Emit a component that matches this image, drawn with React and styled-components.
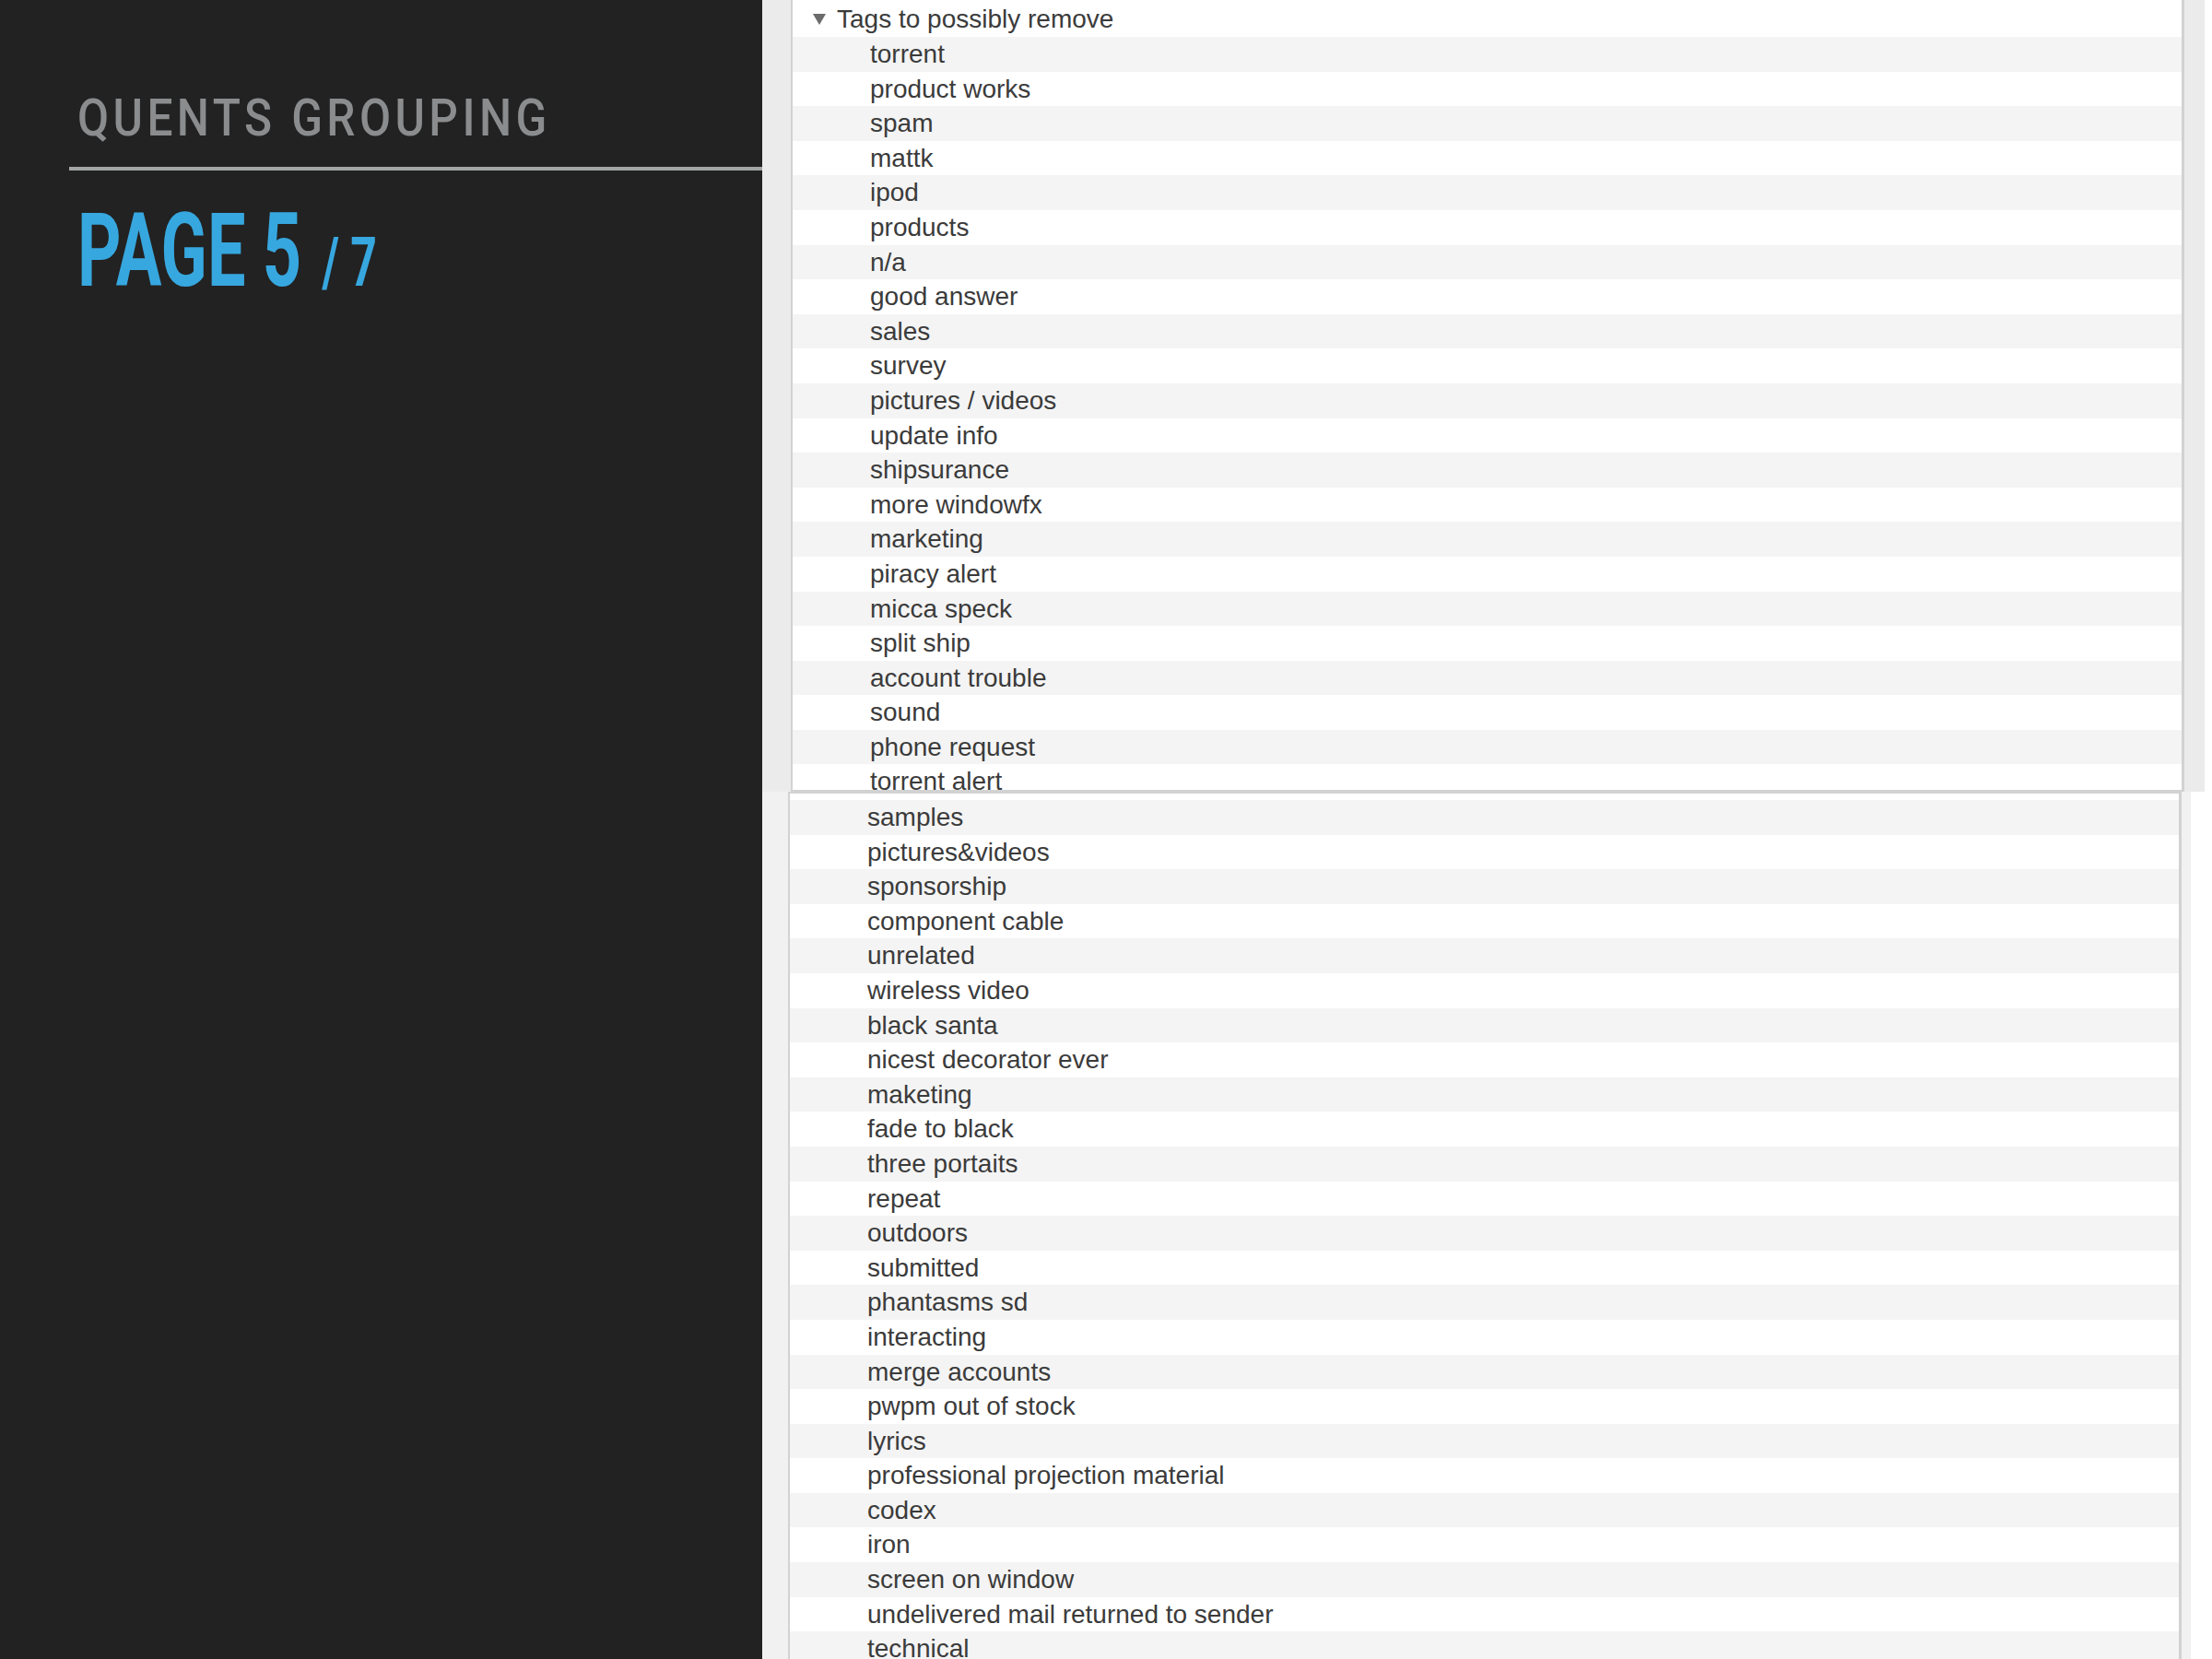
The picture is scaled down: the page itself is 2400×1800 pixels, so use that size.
import React from 'react'
import styled, { createGlobalStyle } from 'styled-components'

const GlobalStyle = createGlobalStyle`
  html, body {
    margin: 0;
    padding: 0;
    background: #ffffff;
  }
`

const Slide = styled.div`
  display: flex;
  width: 2400px;
  height: 1800px;
  overflow: hidden;
`

const Sidebar = styled.aside`
  width: 827px;
  flex-shrink: 0;
  box-sizing: border-box;
  padding: 100px 0 0 84px;
  background: #222222;
`

const Section = styled.div`
  font-family: Roboto, "Liberation Sans", sans-serif;
  font-weight: 500;
  font-size: 56px;
  line-height: 56px;
  letter-spacing: 5px;
  color: #8a8c8e;
  white-space: nowrap;
  transform: scaleX(0.885);
  transform-origin: left center;
`

const Rule = styled.hr`
  margin: 25px 0 0 -9px;
  border: 0;
  height: 4px;
  background: #a4a6a6;
`

const PageNumber = styled.div`
  margin-top: 32px;
  font-family: Roboto, "Liberation Sans", sans-serif;
  font-weight: 700;
  font-size: 111px;
  line-height: 111px;
  color: #37a7df;
  white-space: nowrap;
  transform: scaleX(0.665);
  transform-origin: left center;

  small {
    font-size: 75px;
    margin-left: 6px;
  }
`

const Workspace = styled.main`
  flex: 1;
  display: flex;
  flex-direction: column;
  min-width: 0;
  background: #ffffff;
`

const Capture = styled.section`
  display: flex;
  flex: ${p => (p.$grow ? 1 : 'none')};
  height: ${p => (p.$height ? `${p.$height}px` : 'auto')};
  min-height: 0;
  margin-right: ${p => p.$edge}px;
  padding: 0 ${p => p.$right}px 0 ${p => p.$left}px;
  background: ${p => p.$tone};
`

const Outline = styled.div`
  flex: 1;
  min-width: 0;
  overflow: hidden;
  background: #ffffff;
  border-style: solid;
  border-color: #d2d2d2;
  border-width: ${p => p.$borders};
  padding-top: ${p => p.$top || 0}px;
`

const Row = styled.div`
  height: 37.6px;
  line-height: 37.6px;
  padding-left: 84px;
  background: ${p => (p.$striped ? '#f4f4f4' : '#ffffff')};
  font-family: "Liberation Sans", Arial, sans-serif;
  font-size: 28px;
  color: #3b3b3b;
  white-space: nowrap;
`

const GroupHeader = styled(Row)`
  display: flex;
  align-items: center;
  gap: 12px;
  height: 39px;
  line-height: 39px;
  padding-left: 22px;
`

const Disclosure = () => (
  <svg width="14" height="12" viewBox="0 0 14 12">
    <polygon points="0,0 14,0 7,12" fill="#6b6b6b" />
  </svg>
)

const removable = [
  'torrent', 'product works', 'spam', 'mattk', 'ipod', 'products', 'n/a',
  'good answer', 'sales', 'survey', 'pictures / videos', 'update info',
  'shipsurance', 'more windowfx', 'marketing', 'piracy alert', 'micca speck',
  'split ship', 'account trouble', 'sound', 'phone request', 'torrent alert',
]

const more = [
  'samples', 'pictures&videos', 'sponsorship', 'component cable', 'unrelated',
  'wireless video', 'black santa', 'nicest decorator ever', 'maketing',
  'fade to black', 'three portaits', 'repeat', 'outdoors', 'submitted',
  'phantasms sd', 'interacting', 'merge accounts', 'pwpm out of stock',
  'lyrics', 'professional projection material', 'codex', 'iron',
  'screen on window', 'undelivered mail returned to sender', 'technical',
]

const App = () => {
  return (
    <Slide>
      <GlobalStyle />
      <Sidebar>
        <Section>QUENTS GROUPING</Section>
        <Rule />
        <PageNumber>
          PAGE 5 <small>/ 7</small>
        </PageNumber>
      </Sidebar>
      <Workspace>
        <Capture $height={859} $edge={8} $left={31} $right={22} $tone="#ebebeb">
          <Outline $borders="0 3px 2px 2px" $top={1}>
            <GroupHeader>
              <Disclosure />
              <span>Tags to possibly remove</span>
            </GroupHeader>
            {removable.map((tag, i) => (
              <Row key={tag} $striped={i % 2 === 0}>{tag}</Row>
            ))}
          </Outline>
        </Capture>
        <Capture $grow $edge={23} $left={28} $right={10} $tone="#f1f1f1">
          <Outline $borders="2px 3px 0 2px" $top={7}>
            {more.map((tag, i) => (
              <Row key={tag} $striped={i % 2 === 0}>{tag}</Row>
            ))}
          </Outline>
        </Capture>
      </Workspace>
    </Slide>
  )
}

export default App
